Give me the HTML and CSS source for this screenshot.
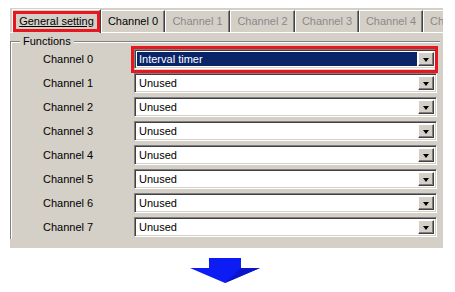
FILE: index.html
```html
<!DOCTYPE html>
<html lang="en">
<head>
  <meta charset="UTF-8" />
  <title>General setting</title>
  <link rel="stylesheet" href="styles.css">
</head>
<body>
  <div class="window">
    <div class="tabs">
      <div class="tab selected marked"><u>General setting</u></div>
      <div class="tab">Channel 0</div>
      <div class="tab off">Channel 1</div>
      <div class="tab off">Channel 2</div>
      <div class="tab off">Channel 3</div>
      <div class="tab off">Channel 4</div>
      <div class="tab off last">Ch</div>
    </div>
    <div class="panel">
      <div class="group">
        <span class="legend">Functions</span>
        <div class="row">
          <span class="label">Channel 0</span>
          <div class="combo active marked"><span class="value">Interval timer</span><span class="drop"></span></div>
        </div>
        <div class="row"><span class="label">Channel 1</span><div class="combo"><span class="value">Unused</span><span class="drop"></span></div></div>
        <div class="row"><span class="label">Channel 2</span><div class="combo"><span class="value">Unused</span><span class="drop"></span></div></div>
        <div class="row"><span class="label">Channel 3</span><div class="combo"><span class="value">Unused</span><span class="drop"></span></div></div>
        <div class="row"><span class="label">Channel 4</span><div class="combo"><span class="value">Unused</span><span class="drop"></span></div></div>
        <div class="row"><span class="label">Channel 5</span><div class="combo"><span class="value">Unused</span><span class="drop"></span></div></div>
        <div class="row"><span class="label">Channel 6</span><div class="combo"><span class="value">Unused</span><span class="drop"></span></div></div>
        <div class="row"><span class="label">Channel 7</span><div class="combo"><span class="value">Unused</span><span class="drop"></span></div></div>
      </div>
    </div>
  </div>

  <div class="arrow">
    <svg width="72" height="28" viewBox="0 0 72 28">
      <polygon points="19,0 51,0 51,10 70,10 35,25 0,10 19,10" fill="#0c1cf2"/>
      <polygon points="51,10 70,10 35,25" fill="#0a14c8"/>
    </svg>
  </div>
</body>
</html>
```

FILE: styles.css
```css
body { margin: 0; background: #fff; font-family: "Liberation Sans", Arial, sans-serif; font-size: 11px; color: #000; }

.window { margin: 8px 0 0 10px; width: 433px; height: 240px; overflow: hidden; background: #d4d0c8; }

.tabs { display: flex; align-items: flex-end; height: 24px; padding-left: 2px; white-space: nowrap; }
.tab { box-sizing: border-box; height: 22px; width: 64px; flex: none; text-align: center; line-height: 20px;
       border-top: 1px solid #fff; border-left: 1px solid #fff; border-right: 1px solid #404040;
       box-shadow: inset -1px 0 0 #808080; }
.tab.off { color: #8a8a8a; }
.tab:nth-child(3), .tab:nth-child(4) { width: 65px; }
.tab.last { flex: 1; width: auto; text-align: left; padding-left: 6px; border-right: none; box-shadow: none; }
.tab.selected { width: 89px; height: 24px; line-height: 22px; position: relative; z-index: 1;
                margin-bottom: -1px; background: #d4d0c8; }
.tab.selected u { text-underline-offset: 1px; }
.marked { position: relative; }
.marked::after { content: ""; position: absolute; border: 3px solid #e8161e; pointer-events: none; }
.tab.marked::after { left: 0; top: 1px; right: 0; bottom: 1px; }

.panel { border-top: 1px solid #fff; height: 215px; }

.group { position: relative; margin-top: 8px; border-top: 1px solid #808080; border-left: 1px solid #808080;
         box-shadow: inset 1px 1px 0 #fff; padding-top: 5px; margin-right: 3px; }
.legend { position: absolute; left: 9px; top: -7px; padding: 0 3px; background: #d4d0c8; line-height: 13px; }

.row { display: flex; align-items: center; height: 24px; }
.label { width: 91px; padding-left: 32px; flex: none; }

.combo { box-sizing: border-box; display: flex; width: 303px; height: 20px; background: #fff;
         border-top: 1px solid #808080; border-left: 1px solid #808080;
         border-bottom: 1px solid #fff; border-right: 1px solid #fff;
         box-shadow: inset 1px 1px 0 #404040, inset -1px -1px 0 #d4d0c8; padding: 2px; }
.value { flex: 1; padding-left: 2px; line-height: 14px; }
.combo.active .value { background: #0a246a; color: #fff; margin-right: 1px; }
.drop { position: relative; box-sizing: border-box; width: 16px; height: 14px; background: #d4d0c8;
        border-top: 1px solid #fff; border-left: 1px solid #fff; border-bottom: 1px solid #404040; border-right: 1px solid #404040;
        box-shadow: inset -1px -1px 0 #808080; }
.drop::before { content: ""; position: absolute; left: 4px; top: 5px; border-left: 3px solid transparent;
                border-right: 3px solid transparent; border-top: 4px solid #000; }
.combo.marked::after { left: -4px; top: -4px; right: -2px; bottom: -5px; }

.arrow { padding: 10px 0 0 190px; line-height: 0; }
```
